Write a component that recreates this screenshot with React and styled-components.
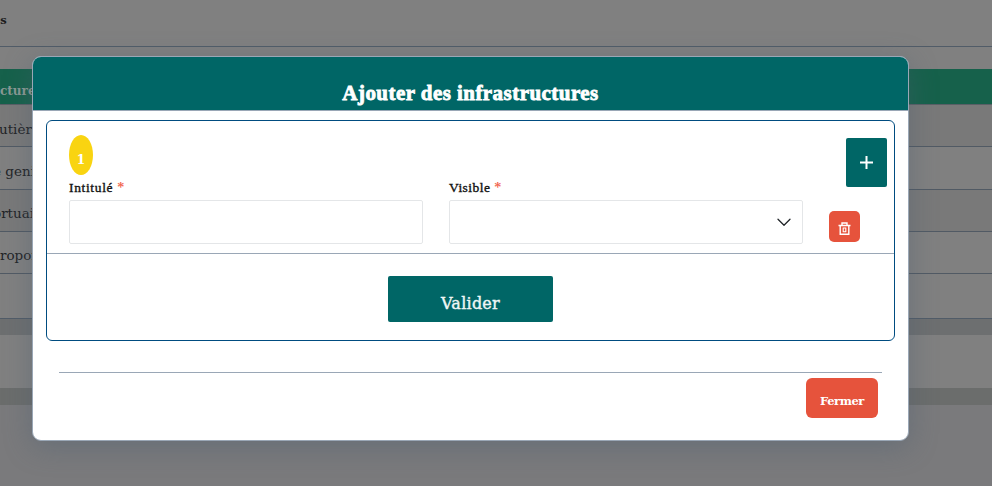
import React from 'react';
import styled, { createGlobalStyle } from 'styled-components';

const GlobalStyle = createGlobalStyle`
  * { box-sizing: border-box; }
  body { margin: 0; overflow: hidden; background: #7a7a7c; font-family: "Liberation Serif", serif; }
  button { font-family: inherit; border: 0; padding: 0; cursor: pointer; }
`;

const Page = styled.div`
  position: relative;
  width: 992px;
  height: 486px;
  overflow: hidden;
  background: #7a7a7c;
`;

const PageHeader = styled.header`
  height: 47px;
  padding-top: 11px;
  background: #808080;
  border-bottom: 1px solid #515c68;
  color: #1c1c1c;
  font: 700 11.5px/18px "DejaVu Serif", serif;
`;

const TableCard = styled.section`
  height: 272px;
  padding-top: 22px;
  background: #808080;
  border-bottom: 1px solid #515c68;
`;

const TableHead = styled.div`
  height: 36px;
  padding-top: 12px;
  background: #16614b;
  border-bottom: 1px solid #5a5f66;
  color: #8b9994;
  font: 700 12px/20px "DejaVu Serif", serif;
`;

const TableRow = styled.div`
  height: ${(p) => p.$height}px;
  padding-top: ${(p) => p.$pad}px;
  background: ${(p) => (p.$striped ? '#797979' : '#808080')};
  border-bottom: 1px solid #515a64;
  color: #222427;
  font: 400 13.5px/20px "DejaVu Serif", serif;
  white-space: nowrap;
`;

const Scrolled = styled.div`
  margin-left: ${(p) => -p.$offset}px;
  white-space: nowrap;
`;

const Band = styled.div`
  height: ${(p) => p.$height}px;
  background: ${(p) => p.$color};
`;

const Dialog = styled.div`
  position: absolute;
  left: 32px;
  top: 56px;
  width: 877px;
  height: 385px;
  background: #fff;
  border: 1px solid #9aa7b6;
  border-radius: 9px;
  box-shadow: 0 6px 28px rgba(75, 92, 112, 0.42);
  overflow: hidden;
`;

const DialogHeader = styled.div`
  height: 54px;
  padding-top: 22px;
  background: #006666;
  border-bottom: 1px solid #9aa7b6;
  text-align: center;
`;

const DialogTitle = styled.h1`
  margin: 0;
  color: #fff;
  font: 700 21px/28px "Liberation Serif", serif;
  letter-spacing: 0.45px;
  -webkit-text-stroke: 0.8px #fff;
`;

const FormBox = styled.form`
  width: 849px;
  height: 221px;
  margin: 9px 0 0 13px;
  border: 1px solid #004c80;
  border-radius: 6px;
`;

const Entry = styled.div`
  height: 133px;
  border-bottom: 1px solid #9aa7b6;
`;

const EntryTop = styled.div`
  display: flex;
  justify-content: space-between;
  height: 59px;
  padding: 14px 7px 0 22px;
`;

const Badge = styled.span`
  width: 24px;
  height: 40px;
  padding-top: 14px;
  border-radius: 50%;
  background: #f9d411;
  color: #fff;
  font: 700 13.5px/20px "DejaVu Serif Condensed", "DejaVu Serif", serif;
  font-stretch: condensed;
  text-align: center;
`;

const AddButton = styled.button`
  display: flex;
  align-items: center;
  justify-content: center;
  width: 41px;
  height: 49px;
  margin-top: 3px;
  border-radius: 2px;
  background: #006666;
`;

const Fields = styled.div`
  display: flex;
  padding-left: 22px;
`;

const Field = styled.label`
  width: 354px;
  margin-right: 26px;
`;

const Label = styled.span`
  display: block;
  height: 20px;
  color: #111;
  font: 400 13.5px/16px "Liberation Serif", serif;
  letter-spacing: ${(p) => p.$spacing}px;
  -webkit-text-stroke: 0.35px #111;
`;

const Required = styled.span`
  color: #f1593e;
  font-size: 14px;
  -webkit-text-stroke: 0.2px #f1593e;
`;

const Control = styled.div`
  display: flex;
  align-items: center;
  justify-content: flex-end;
  height: 44px;
  padding-right: 11px;
  background: #fff;
  border: 1px solid #e4e6e8;
  border-radius: 2px;
`;

const TextInput = styled.input`
  display: block;
  width: 100%;
  height: 44px;
  border: 1px solid #e4e6e8;
  border-radius: 2px;
  outline: 0;
`;

const DeleteButton = styled.button`
  display: flex;
  align-items: center;
  justify-content: center;
  width: 31px;
  height: 31px;
  margin-top: 31px;
  padding-top: 3px;
  border-radius: 5px;
  background: #e6533c;
`;

const SubmitButton = styled.button`
  display: block;
  width: 165px;
  height: 46px;
  margin: 22px 0 0 341px;
  padding-top: 9px;
  border-radius: 2px;
  background: #006666;
  color: #eef6f5;
  font: 400 16px/24px "DejaVu Serif", serif;
  letter-spacing: 0.25px;
  -webkit-text-stroke: 0.4px #eef6f5;
`;

const DialogFooter = styled.footer`
  display: flex;
  justify-content: flex-end;
  width: 823px;
  margin: 31px 0 0 26px;
  padding: 5px 4px 0 0;
  border-top: 1px solid #9aa7b6;
`;

const CloseButton = styled.button`
  width: 72px;
  height: 40px;
  padding-top: 6px;
  border-radius: 6px;
  background: #e6533c;
  color: #fff;
  font: 700 11.5px/18px "DejaVu Serif", serif;
  letter-spacing: -0.45px;
`;

const rows = [
  { text: 'utièr', height: 42, striped: true, offset: 1, pad: 14 },
  { text: 'e geni', height: 43, offset: 7, pad: 14 },
  { text: 'ortuai', height: 42, striped: true, offset: 7, pad: 13 },
  { text: 'ropor', height: 42, offset: 0, pad: 13 },
];

const TrashIcon = () => (
  <svg width="13" height="13" viewBox="0 0 13 13" fill="none" stroke="#fff" strokeWidth="1.4">
    <path d="M.5 3.5h12M4 3V1h5v2M2.2 3.5v8.7h8.6V3.5" />
    <path d="M5.2 5.7v4.3M7.8 5.7v4.3M4.8 6h3.4M4.8 9.7h3.4" strokeWidth="1.1" />
  </svg>
);

export default function App() {
  return (
    <>
      <GlobalStyle />
      <Page>
        <PageHeader><Scrolled $offset={7}>es</Scrolled></PageHeader>
        <TableCard>
          <TableHead><Scrolled $offset={0}>cture</Scrolled></TableHead>
          {rows.map((row) => (
            <TableRow key={row.text} $height={row.height} $striped={row.striped} $pad={row.pad}>
              <Scrolled $offset={row.offset}>{row.text}</Scrolled>
            </TableRow>
          ))}
        </TableCard>
        <Band $height={16} $color="#6d6f70" />
        <Band $height={53} $color="#808080" />
        <Band $height={17} $color="#6b6d6c" />
        <Dialog role="dialog">
          <DialogHeader><DialogTitle>Ajouter des infrastructures</DialogTitle></DialogHeader>
          <FormBox>
            <Entry>
              <EntryTop>
                <Badge>1</Badge>
                <AddButton type="button" aria-label="Ajouter">
                  <svg width="13" height="13" viewBox="0 0 13 13" stroke="#fff" strokeWidth="2">
                    <path d="M6.5 0v13M0 6.5h13" />
                  </svg>
                </AddButton>
              </EntryTop>
              <Fields>
                <Field>
                  <Label $spacing={0.65}>Intitulé <Required>*</Required></Label>
                  <TextInput />
                </Field>
                <Field>
                  <Label $spacing={0.45}>Visible <Required>*</Required></Label>
                  <Control>
                    <svg width="14" height="9" viewBox="0 0 14 9" fill="none" stroke="#212529" strokeWidth="1.3" strokeLinecap="round" strokeLinejoin="round">
                      <path d="M1 1.3l6 6 6-6" />
                    </svg>
                  </Control>
                </Field>
                <DeleteButton type="button" aria-label="Supprimer"><TrashIcon /></DeleteButton>
              </Fields>
            </Entry>
            <SubmitButton type="button">Valider</SubmitButton>
          </FormBox>
          <DialogFooter><CloseButton>Fermer</CloseButton></DialogFooter>
        </Dialog>
      </Page>
    </>
  );
}
